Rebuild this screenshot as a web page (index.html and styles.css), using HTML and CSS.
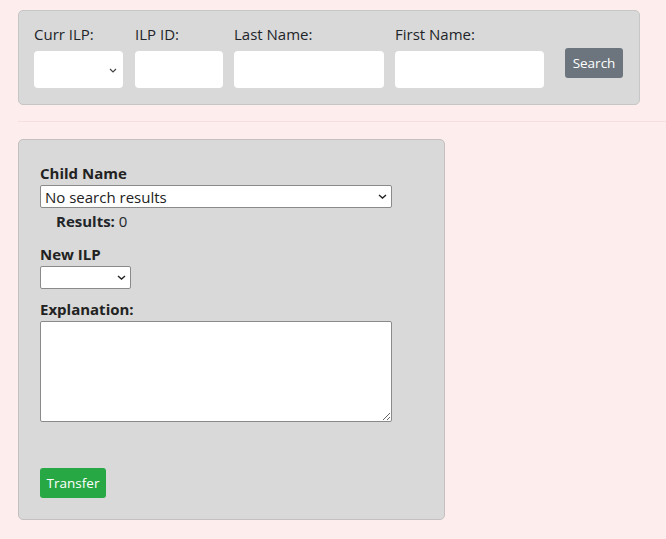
FILE: index.html
```html
<!DOCTYPE html>
<html>
<head>
<meta charset="utf-8">
<link rel="stylesheet" href="styles.css">
</head>
<body>
<div class="page">
  <form class="search-panel">
    <div class="field">
      <label class="top-label">Curr ILP:</label>
      <div class="select-wrap sw-curr">
        <select class="top-input sel-curr"><option></option></select>
        <svg class="chev" width="8" height="5" viewBox="0 0 8 5"><path d="M1 1 L4 4 L7 1" fill="none" stroke="#444" stroke-width="1.2"/></svg>
      </div>
    </div>
    <div class="field">
      <label class="top-label">ILP ID:</label>
      <input class="top-input in-id" type="text">
    </div>
    <div class="field">
      <label class="top-label">Last Name:</label>
      <input class="top-input in-last" type="text">
    </div>
    <div class="field">
      <label class="top-label">First Name:</label>
      <input class="top-input in-first" type="text">
    </div>
    <button type="button" class="btn btn-search">Search</button>
  </form>
  <hr class="divider">
  <form class="transfer-panel">
    <label class="bold-label">Child Name</label>
    <div class="select-wrap sw-child">
      <select class="plain-select sel-child"><option>No search results</option></select>
      <svg class="chev" width="9" height="5" viewBox="0 0 9 5"><path d="M1 1 L4.5 4 L8 1" fill="none" stroke="#222" stroke-width="1.4"/></svg>
    </div>
    <div class="results"><b>Results:</b> 0</div>
    <label class="bold-label">New ILP</label>
    <div class="select-wrap sw-ilp">
      <select class="plain-select sel-ilp"><option></option></select>
      <svg class="chev" width="9" height="5" viewBox="0 0 9 5"><path d="M1 1 L4.5 4 L8 1" fill="none" stroke="#222" stroke-width="1.4"/></svg>
    </div>
    <label class="bold-label expl">Explanation:</label>
    <textarea class="expl-area"></textarea>
    <button type="button" class="btn btn-transfer">Transfer</button>
  </form>
</div>
</body>
</html>
```
FILE: styles.css
```css
html, body {
  margin: 0;
  padding: 0;
  background: #fdeeed;
}
body {
  font-family: "Open Sans", "Noto Sans", sans-serif;
  color: #212529;
  overflow: hidden;
}
.page {
  padding: 10px 0 0 18px;
}
.search-panel {
  width: 622px;
  box-sizing: border-box;
  display: flex;
  align-items: flex-start;
  gap: 11px;
  background: #d9d9d9;
  border: 1px solid #c6c6c6;
  border-radius: 5px;
  padding: 11px 15px 16px 15px;
  height: 95px;
}
.field {
  display: flex;
  flex-direction: column;
}
.top-label {
  font-size: 15px;
  line-height: 24px;
  margin-bottom: 5px;
  color: #212529;
}
.top-input {
  box-sizing: border-box;
  height: 37px;
  border: none;
  border-radius: 4px;
  background: #fff;
  font-family: inherit;
  font-size: 15px;
  outline: none;
  margin: 0;
  padding: 0 8px;
}
.select-wrap {
  position: relative;
}
.chev {
  position: absolute;
  pointer-events: none;
}
.sel-curr {
  width: 89px;
  appearance: none;
  -webkit-appearance: none;
  display: block;
  margin-right: 1px;
}
.sw-curr .chev {
  right: 7px;
  top: 17px;
}
.in-id { width: 88px; }
.in-last { width: 150px; }
.in-first { width: 149px; }
.btn {
  border: none;
  border-radius: 3px;
  color: #fff;
  font-family: inherit;
  font-size: 13.5px;
  height: 30px;
  padding: 0;
  margin: 0;
  cursor: pointer;
}
.btn-search {
  background: #6c757d;
  width: 58px;
  margin-top: 26px;
  margin-left: 10px;
}
.divider {
  border: none;
  border-top: 1px solid #f5dedd;
  height: 0;
  margin: 16px 0 17px 0;
}
.transfer-panel {
  width: 427px;
  height: 381px;
  box-sizing: border-box;
  background: #d9d9d9;
  border: 1px solid #c4c0c0;
  border-radius: 5px;
  padding: 21px 21px 21px 21px;
  display: flex;
  flex-direction: column;
  align-items: flex-start;
}
.bold-label {
  font-weight: 700;
  font-size: 15px;
  line-height: 24px;
  color: #222;
}
.plain-select {
  appearance: none;
  -webkit-appearance: none;
  display: block;
  box-sizing: border-box;
  height: 23px;
  border: 1px solid #8a8a8a;
  border-radius: 2px;
  background: #fff;
  font-family: inherit;
  font-size: 15px;
  color: #222;
  padding: 0 4px;
  margin: 0;
  outline: none;
}
.sel-child { width: 352px; }
.sel-ilp { width: 91px; }
.sw-child .chev, .sw-ilp .chev {
  right: 5px;
  top: 9px;
}
.results {
  margin-left: 16px;
  font-size: 15px;
  line-height: 22px;
  margin-top: 2px;
  margin-bottom: 10px;
}
.results b { font-weight: 700; }
.expl {
  margin-top: 8px;
}
.expl-area {
  box-sizing: border-box;
  width: 352px;
  height: 102px;
  border: 1px solid #8a8a8a;
  border-radius: 2px;
  background: #fff;
  margin: 0;
  outline: none;
}
.btn-transfer {
  background: #28a745;
  width: 66px;
  margin-top: 46px;
}
```
